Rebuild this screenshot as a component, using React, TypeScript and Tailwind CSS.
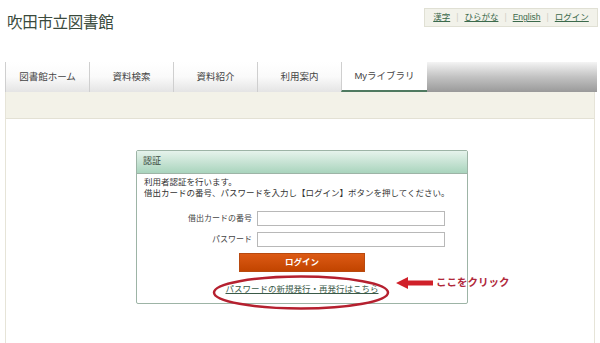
import React from 'react';

const tabs = ['図書館ホーム', '資料検索', '資料紹介', '利用案内'];
const langLinks = ['漢字', 'ひらがな', 'English', 'ログイン'];

export default function App() {
  return (
    <div
      className="relative w-[600px] h-[343px] overflow-hidden bg-white text-[#333]"
      style={{ fontFamily: '"Liberation Sans", "Noto Sans CJK JP", sans-serif' }}
    >
      {/* Header */}
      <header className="flex justify-between h-[62px]">
        <h1 className="pl-[7px] pt-[12px] text-[15.5px] leading-[22px] text-[#3a4a3c] tracking-[-0.3px]">吹田市立図書館</h1>
        <div className="mt-[8px] mr-[2px] h-[19px] w-[174px] flex items-center justify-center gap-[6px] bg-[#f2f2ea] border border-[#e0e0d4] text-[8.5px]">
          {langLinks.map((l, i) => (
            <React.Fragment key={l}>
              {i > 0 && <span className="text-[#d0d0c4]">|</span>}
              <a className="underline text-[#3c6a4c]">{l}</a>
            </React.Fragment>
          ))}
        </div>
      </header>

      {/* Nav tabs */}
      <nav className="flex h-[30px] pl-[5px] pr-[3px]">
        {tabs.map((t) => (
          <div
            key={t}
            className="w-[84px] flex items-center justify-center border-l border-[#cfcfcf] bg-gradient-to-b from-white via-[#fafafa] to-[#e4e4e4] text-[9.5px] text-[#444]"
          >
            {t}
          </div>
        ))}
        <div className="w-[86px] flex items-center justify-center bg-white border-l border-[#cfcfcf] border-b-2 border-b-[#4f7a60] text-[9.5px] text-[#444]">
          Myライブラリ
        </div>
        <div className="flex-1 bg-gradient-to-b from-[#f4f4f4] via-[#c2c2c2] to-[#9a9a9a]" />
      </nav>

      {/* Content */}
      <div className="ml-[5px] mr-[5px] border-x border-[#e6e4d8]">
        <div className="h-[26px] bg-[#f3f2e8]" />
        <main className="bg-white border-t border-[#e3e1d4] h-[240px] pt-[31px]">
          <section className="relative ml-[130px] w-[332px] h-[154px] border border-[#9db4a6] rounded-[2px] bg-white">
            <div className="h-[23px] flex items-center pl-[6px] bg-gradient-to-b from-[#e6f3ec] to-[#a9d4bd] border-b border-[#9db4a6] text-[9px] text-[#3a4a3c]">
              認証
            </div>
            <div className="pl-[7px] pt-[3px] text-[8.5px] leading-[10.5px] text-[#333]">
              <p>利用者認証を行います。</p>
              <p>借出カードの番号、パスワードを入力し【ログイン】ボタンを押してください。</p>
            </div>
            <div className="mt-[13px] grid grid-cols-[115px_188px] gap-x-[5px] gap-y-[6px] items-center text-[8px] text-[#444]">
              <label className="text-right">借出カードの番号</label>
              <input className="h-[15px] border border-[#b8b8b8] bg-white" />
              <label className="text-right">パスワード</label>
              <input type="password" className="h-[15px] border border-[#b8b8b8] bg-white" />
            </div>
            <div className="mt-[6px] flex justify-center">
              <button className="w-[126px] h-[19px] bg-gradient-to-b from-[#dc5a14] to-[#c24400] border border-[#b84a10] text-white font-bold text-[8.5px]">
                ログイン
              </button>
            </div>
            <div className="mt-[11px] flex justify-center">
              <a className="underline text-[8.5px] text-[#3a5a48]">パスワードの新規発行・再発行はこちら</a>
            </div>
          </section>
        </main>
      </div>

      {/* Annotation */}
      <svg className="absolute left-[211px] top-[274px]" width="180" height="37" viewBox="0 0 180 37">
        <ellipse cx="90" cy="18.5" rx="87" ry="16" fill="none" stroke="#b5202f" strokeWidth="2.5" />
      </svg>
      <svg className="absolute left-[396px] top-[276px]" width="38" height="14" viewBox="0 0 38 14">
        <polygon points="0,7 12,1 12,4.5 37,4.5 37,9.5 12,9.5 12,13" fill="#d0202a" />
      </svg>
      <span className="absolute left-[436px] top-[275px] text-[10.5px] font-bold text-[#b0283a]">ここをクリック</span>
    </div>
  );
}
